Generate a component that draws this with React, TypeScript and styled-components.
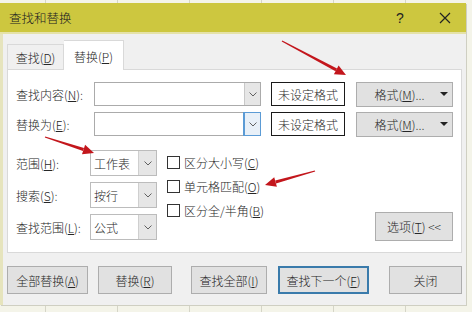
import React from 'react';
import styled, { createGlobalStyle } from 'styled-components';

const GlobalStyle = createGlobalStyle`
  html, body { margin: 0; padding: 0; }
  body {
    width: 472px;
    height: 312px;
    overflow: hidden;
    background: #f4f4e9;
    font-family: "Noto Sans CJK SC", "Microsoft YaHei", sans-serif;
    font-size: 12px;
    font-weight: 300;
    color: #262626;
  }
`;

type ArrowProps = { x1: number; y1: number; x2: number; y2: number };

// red annotation arrow: tapered shaft plus a triangular head
const Arrow = ({ x1, y1, x2, y2 }: ArrowProps) => {
  const dx = x2 - x1;
  const dy = y2 - y1;
  const len = Math.hypot(dx, dy);
  const ux = dx / len;
  const uy = dy / len;
  const nx = -uy;
  const ny = ux;
  const bx = x2 - ux * 11;
  const by = y2 - uy * 11;
  const shaft = [
    [x1 + nx * 0.6, y1 + ny * 0.6],
    [bx + nx * 1.6, by + ny * 1.6],
    [bx - nx * 1.6, by - ny * 1.6],
    [x1 - nx * 0.6, y1 - ny * 0.6],
  ];
  const head = [
    [x2, y2],
    [bx + nx * 5, by + ny * 5],
    [bx - nx * 5, by - ny * 5],
  ];
  const pts = (p: number[][]) => p.map(([a, b]) => `${a.toFixed(1)},${b.toFixed(1)}`).join(' ');
  return (
    <g fill="#c3161c">
      <polygon points={pts(shaft)} />
      <polygon points={pts(head)} />
    </g>
  );
};

const Chevron = () => (
  <svg width="8" height="5" viewBox="0 0 8 5">
    <polyline points="0.5,0.5 4,4 7.5,0.5" fill="none" stroke="#606060" strokeWidth="1" />
  </svg>
);

const App = () => {
  return (
    <>
      <GlobalStyle />
      <Sheet>
        <Dialog>
          <TitleBar>
            <Title>查找和替换</Title>
            <Help>?</Help>
            <Close>
              <svg width="12" height="12" viewBox="0 0 12 12">
                <path d="M1 1 L11 11 M11 1 L1 11" stroke="#222" strokeWidth="1.2" />
              </svg>
            </Close>
          </TitleBar>
          <Body>
            <Tabs>
              <Tab $w={57}>查找(<u>D</u>)</Tab>
              <Tab $w={60} $active>替换(<u>P</u>)</Tab>
            </Tabs>
            <Panel>
              <Row>
                <Label $w={78}>查找内容(<u>N</u>):</Label>
                <Combo>
                  <ComboField />
                  <ComboArrow><Chevron /></ComboArrow>
                </Combo>
                <Preview>未设定格式</Preview>
                <FormatButton>
                  <span>格式(<u>M</u>)...</span>
                  <Caret />
                </FormatButton>
              </Row>
              <Row $mt={6}>
                <Label $w={78}>替换为(<u>E</u>):</Label>
                <Combo>
                  <ComboField />
                  <ComboArrow $focus><Chevron /></ComboArrow>
                </Combo>
                <Preview>未设定格式</Preview>
                <FormatButton>
                  <span>格式(<u>M</u>)...</span>
                  <Caret />
                </FormatButton>
              </Row>
              <Options>
                <SelectGrid>
                  <Label $w={74}>范围(<u>H</u>):</Label>
                  <Select>
                    <SelectValue>工作表</SelectValue>
                    <SelectArrow><Chevron /></SelectArrow>
                  </Select>
                  <Label $w={74}>搜索(<u>S</u>):</Label>
                  <Select>
                    <SelectValue>按行</SelectValue>
                    <SelectArrow><Chevron /></SelectArrow>
                  </Select>
                  <Label $w={74}>查找范围(<u>L</u>):</Label>
                  <Select>
                    <SelectValue>公式</SelectValue>
                    <SelectArrow><Chevron /></SelectArrow>
                  </Select>
                </SelectGrid>
                <Checks>
                  <Check><Box />区分大小写(<u>C</u>)</Check>
                  <Check><Box />单元格匹配(<u>O</u>)</Check>
                  <Check><Box />区分全/半角(<u>B</u>)</Check>
                </Checks>
                <OptionsButton>选项(<u>T</u>) &lt;&lt;</OptionsButton>
              </Options>
            </Panel>
            <Buttons>
              <Button $w={81}>全部替换(<u>A</u>)</Button>
              <Button $w={74} $ml={10}>替换(<u>R</u>)</Button>
              <Button $w={76} $ml={19}>查找全部(<u>I</u>)</Button>
              <Button $w={91} $ml={11} $focus>查找下一个(<u>F</u>)</Button>
              <Button $w={73} $ml={20}>关闭</Button>
            </Buttons>
          </Body>
        </Dialog>
        <Annotations width="472" height="312" viewBox="0 0 472 312">
          <Arrow x1={282} y1={41} x2={346} y2={75} />
          <Arrow x1={45} y1={137} x2={94} y2={153} />
          <Arrow x1={315} y1={171} x2={265} y2={185} />
        </Annotations>
      </Sheet>
    </>
  );
};

const Sheet = styled.div`
  position: relative;
  width: 472px;
  height: 312px;
  box-sizing: border-box;
  padding-top: 3px;
  background-color: #f4f4e9;
  background-image: linear-gradient(90deg, transparent 71px, #d5d5c7 71px);
  background-size: 72px 100%;
  background-position: 46px 0;
`;

const Dialog = styled.div`
  width: 466px;
  height: 302px;
  display: flex;
  flex-direction: column;
  background: #f0f0f0;
  box-shadow: 1px 1px 0 #cfcfc2;
`;

const TitleBar = styled.div`
  flex: none;
  height: 29px;
  display: flex;
  align-items: center;
  padding: 0 8px 0 9px;
  background: #cdc73f;
  border-bottom: 2px solid #e5e2a8;
`;

const Title = styled.div`
  font-size: 12.5px;
  color: #222;
`;

const Help = styled.div`
  margin-left: auto;
  width: 20px;
  text-align: center;
  font-family: "Liberation Sans", Arial, sans-serif;
  font-size: 14px;
  color: #222;
`;

const Close = styled.div`
  width: 26px;
  margin-left: 22px;
  display: flex;
  justify-content: center;
`;

const Body = styled.div`
  flex: 1;
  display: flex;
  flex-direction: column;
  border-left: 3px solid #e6e4bd;
  padding: 7px 4px 10px 4px;
`;

const Tabs = styled.div`
  height: 29px;
  display: flex;
  align-items: flex-end;
  margin-bottom: -1px;
  position: relative;
  z-index: 1;
`;

const Tab = styled.div<{ $w: number; $active?: boolean }>`
  width: ${p => p.$w}px;
  height: ${p => (p.$active ? 30 : 26)}px;
  box-sizing: border-box;
  display: flex;
  align-items: center;
  justify-content: center;
  padding-top: ${p => (p.$active ? 1 : 0)}px;
  background: ${p => (p.$active ? '#ffffff' : '#f0f0f0')};
  border: 1px solid #d9d9d9;
  border-bottom: ${p => (p.$active ? 'none' : '1px solid #d9d9d9')};
  border-left: ${p => (p.$active ? 'none' : '1px solid #d9d9d9')};
`;

const Panel = styled.div`
  height: 184px;
  box-sizing: border-box;
  border: 1px solid #d9d9d9;
  background: #ffffff;
  padding: 12px 8px 0 8px;
`;

const Row = styled.div<{ $mt?: number }>`
  display: flex;
  align-items: center;
  height: 24px;
  margin-top: ${p => p.$mt ?? 0}px;
`;

const Label = styled.div<{ $w: number }>`
  width: ${p => p.$w}px;
  flex: none;
  white-space: nowrap;
`;

const Combo = styled.div`
  width: 167px;
  height: 24px;
  box-sizing: border-box;
  display: flex;
  border: 1px solid #ababab;
  background: #fff;
`;

const ComboField = styled.div`
  flex: 1;
`;

const ComboArrow = styled.div<{ $focus?: boolean }>`
  width: 16px;
  display: flex;
  align-items: center;
  justify-content: center;
  box-sizing: border-box;
  background: ${p => (p.$focus ? '#e8f0f8' : '#e6e6e6')};
  border-left: 1px solid ${p => (p.$focus ? '#5b9bd5' : '#c8c8c8')};
  outline: ${p => (p.$focus ? '1px solid #5b9bd5' : 'none')};
`;

const Preview = styled.div`
  width: 74px;
  height: 24px;
  margin-left: 10px;
  box-sizing: border-box;
  display: flex;
  align-items: center;
  justify-content: center;
  border: 1px solid #1a1a1a;
  background: #fff;
`;

const FormatButton = styled.div`
  width: 97px;
  height: 25px;
  margin-left: 11px;
  box-sizing: border-box;
  display: flex;
  align-items: center;
  padding: 0 4px 0 8px;
  background: #e1e1e1;
  border: 1px solid #adadad;
  span {
    flex: 1;
    text-align: center;
  }
`;

const Caret = styled.div`
  width: 0;
  height: 0;
  margin-left: 6px;
  border-left: 4px solid transparent;
  border-right: 4px solid transparent;
  border-top: 4px solid #222;
`;

const Options = styled.div`
  display: flex;
  height: 91px;
  margin-top: 14px;
`;

const SelectGrid = styled.div`
  display: grid;
  grid-template-columns: 74px 67px;
  grid-auto-rows: 26px;
  row-gap: 6px;
  align-items: center;
  align-content: start;
`;

const Select = styled.div`
  height: 26px;
  box-sizing: border-box;
  display: flex;
  border: 1px solid #bcbcbc;
  background: #fff;
`;

const SelectValue = styled.div`
  flex: 1;
  display: flex;
  align-items: center;
  padding-left: 3px;
`;

const SelectArrow = styled.div`
  width: 17px;
  display: flex;
  align-items: center;
  justify-content: center;
  background: #e6e6e6;
  border-left: 1px solid #cfcfcf;
`;

const Checks = styled.div`
  display: flex;
  flex-direction: column;
  margin-left: 10px;
`;

const Check = styled.div`
  height: 24px;
  display: flex;
  align-items: center;
  white-space: nowrap;
`;

const Box = styled.span`
  width: 13px;
  height: 13px;
  box-sizing: border-box;
  border: 1px solid #333;
  background: #fff;
  margin-right: 4px;
`;

const OptionsButton = styled.div`
  width: 78px;
  height: 29px;
  margin-left: auto;
  align-self: flex-end;
  box-sizing: border-box;
  display: flex;
  align-items: center;
  justify-content: center;
  background: #e1e1e1;
  border: 1px solid #adadad;
  white-space: pre;
`;

const Buttons = styled.div`
  display: flex;
  height: 28px;
  margin-top: 13px;
`;

const Button = styled.div<{ $w: number; $ml?: number; $focus?: boolean }>`
  width: ${p => p.$w}px;
  margin-left: ${p => p.$ml ?? 0}px;
  box-sizing: border-box;
  display: flex;
  align-items: center;
  justify-content: center;
  white-space: nowrap;
  background: #e1e1e1;
  border: ${p => (p.$focus ? '2px solid #3a7bab' : '1px solid #adadad')};
`;

const Annotations = styled.svg`
  position: absolute;
  left: 0;
  top: 0;
  pointer-events: none;
`;

export default App;
